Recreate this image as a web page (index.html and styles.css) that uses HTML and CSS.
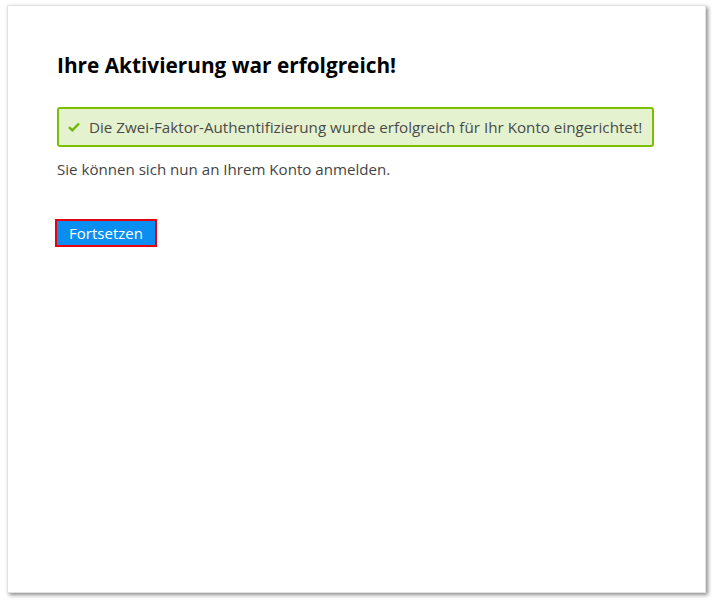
FILE: index.html
```html
<!DOCTYPE html>
<html lang="de">
<head>
<meta charset="utf-8">
<title>Aktivierung</title>
<link rel="stylesheet" href="styles.css">
</head>
<body>
<div class="card">
  <h1 class="title">Ihre Aktivierung war erfolgreich!</h1>
  <div class="alert">
    <svg class="check" viewBox="0 0 12 10" width="12" height="10"><path d="M1 5.2 L4.3 8.3 L11 1.5" fill="none" stroke="#6cb800" stroke-width="2.4"/></svg>
    <span>Die Zwei-Faktor-Authentifizierung wurde erfolgreich für Ihr Konto eingerichtet!</span>
  </div>
  <p class="info">Sie können sich nun an Ihrem Konto anmelden.</p>
  <div class="actions">
    <button class="btn">Fortsetzen</button>
  </div>
</div>
</body>
</html>
```
FILE: styles.css
```css
html, body { margin: 0; padding: 0; background: #fff; }
body {
  font-family: "Open Sans", "Noto Sans", sans-serif;
  padding: 5px 9px 8px 7px;
}
.card {
  box-sizing: border-box;
  width: 699px;
  height: 588px;
  background: #fff;
  border: 1px solid #e2e2e2;
  box-shadow: 2px 2px 4px rgba(0,0,0,0.45);
  padding: 46px 51px 0 49px;
}
.title {
  margin: 0;
  font-size: 20.8px;
  font-weight: 700;
  color: #000;
  line-height: 27px;
}
.alert {
  margin-top: 28px;
  height: 40px;
  box-sizing: border-box;
  border: 2px solid #7bbf00;
  border-radius: 3px;
  background: #e4f2cf;
  display: flex;
  align-items: center;
  padding-left: 9px;
  font-size: 15.2px;
  color: #4a4a4a;
}
.check { margin-right: 9px; flex: none; }
.info {
  margin: 12px 0 0;
  font-size: 15.1px;
  color: #444;
  line-height: 21px;
}
.actions { margin-top: 39px; }
.btn {
  display: block;
  box-sizing: border-box;
  height: 28px;
  width: 102px;
  background: #0b8ef1;
  color: #fff;
  border: 2px solid #e8000d;
  font-family: inherit;
  font-size: 15px;
  padding: 0;
  margin-left: -2px;
}
```
